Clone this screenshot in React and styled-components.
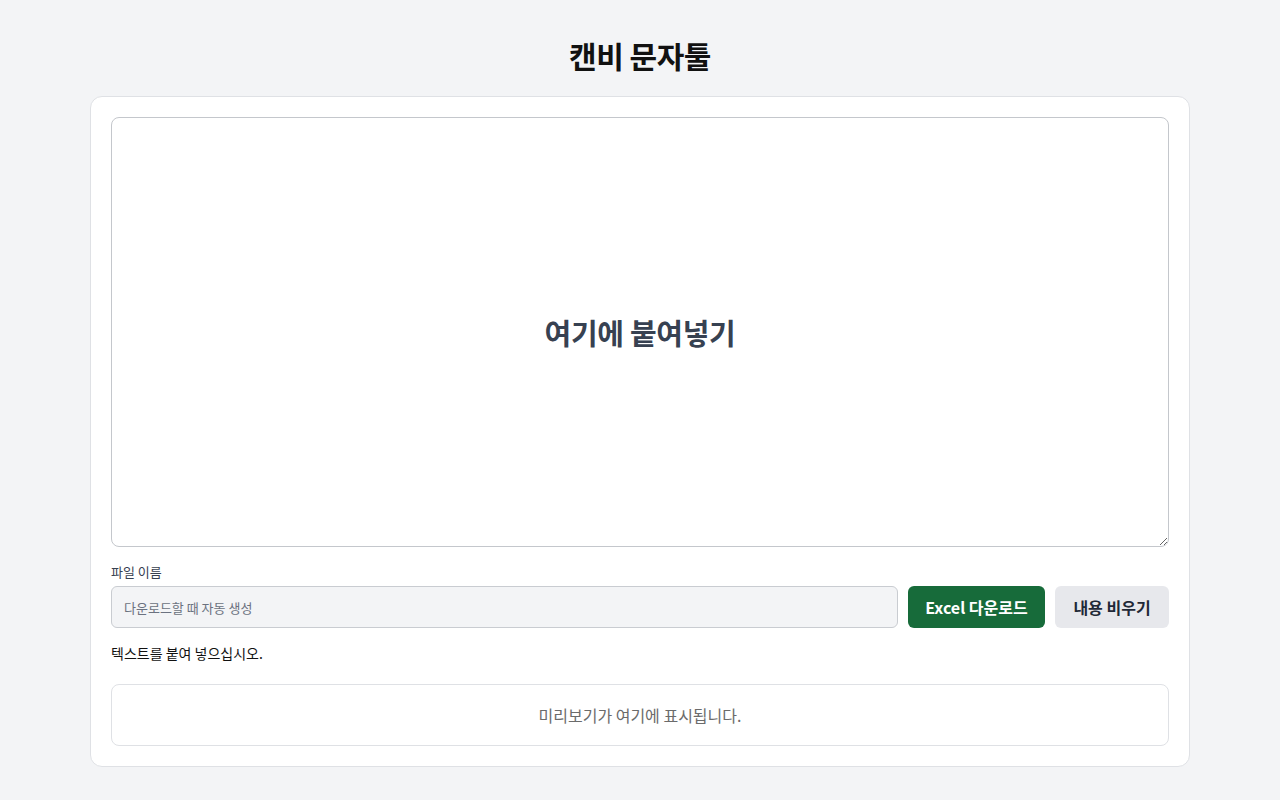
import React, { useState } from "react";
import styled, { createGlobalStyle } from "styled-components";

const GlobalStyle = createGlobalStyle`
  * { box-sizing: border-box; }
  body {
    margin: 0;
    background: #f3f4f6;
    font-family: "Noto Sans CJK KR", "Noto Sans", sans-serif;
    color: #111827;
  }
`;

const Page = styled.main`
  padding: 36px 90px 30px;
  display: flex;
  flex-direction: column;
  align-items: center;
`;

const Title = styled.h1`
  margin: 0 0 22px;
  font-size: 30px;
  line-height: 38px;
  font-weight: 700;
  color: #111;
  letter-spacing: -0.5px;
`;

const Card = styled.section`
  width: 1100px;
  background: #fff;
  border: 1px solid #dfe1e5;
  border-radius: 12px;
  padding: 20px;
  display: flex;
  flex-direction: column;
`;

const PasteWrap = styled.div`
  position: relative;
  height: 430px;
`;

const PasteArea = styled.textarea`
  width: 100%;
  height: 100%;
  border: 1px solid #c4c7cc;
  border-radius: 8px;
  resize: vertical;
  padding: 12px;
  font-family: inherit;
  font-size: 14px;
  outline: none;
  display: block;
`;

const PasteHint = styled.div`
  position: absolute;
  inset: 0;
  display: flex;
  align-items: center;
  justify-content: center;
  pointer-events: none;
  font-size: 29px;
  font-weight: 700;
  color: #374151;
  letter-spacing: -0.3px;
`;

const Label = styled.label`
  margin-top: 16px;
  font-size: 13px;
  line-height: 17px;
  color: #374151;
`;

const Row = styled.div`
  margin-top: 6px;
  display: flex;
  gap: 10px;
`;

const NameInput = styled.input`
  flex: 1;
  height: 42px;
  background: #f3f4f6;
  border: 1px solid #c9ccd1;
  border-radius: 6px;
  padding: 0 12px;
  font-family: inherit;
  font-size: 13px;
  color: #111;
  outline: none;
  &::placeholder { color: #6b7280; }
`;

const Button = styled.button`
  height: 42px;
  padding: 0;
  border: none;
  border-radius: 6px;
  font-family: inherit;
  font-size: 16px;
  font-weight: 700;
  cursor: pointer;
  background: ${p => (p.$primary ? "#176b3a" : "#e7e8ec")};
  color: ${p => (p.$primary ? "#fff" : "#1f2937")};
  width: ${p => p.$w}px;
`;

const Status = styled.p`
  margin: 16px 0 0;
  font-size: 14px;
  line-height: 18px;
  color: #111;
`;

const Preview = styled.div`
  margin-top: 22px;
  height: 62px;
  border: 1px solid #dfe1e5;
  border-radius: 8px;
  display: flex;
  align-items: center;
  justify-content: center;
  font-size: 16px;
  color: #6b6b6b;
`;

export default function App() {
  const [text, setText] = useState("");
  const [name, setName] = useState("");
  return (
    <>
      <GlobalStyle />
      <Page>
        <Title>캔비 문자툴</Title>
        <Card>
          <PasteWrap>
            <PasteArea value={text} onChange={e => setText(e.target.value)} />
            {!text && <PasteHint>여기에 붙여넣기</PasteHint>}
          </PasteWrap>
          <Label htmlFor="fname">파일 이름</Label>
          <Row>
            <NameInput
              id="fname"
              placeholder="다운로드할 때 자동 생성"
              value={name}
              onChange={e => setName(e.target.value)}
            />
            <Button $primary $w={137}>Excel 다운로드</Button>
            <Button $w={114} onClick={() => setText("")}>내용 비우기</Button>
          </Row>
          <Status>텍스트를 붙여 넣으십시오.</Status>
          <Preview>미리보기가 여기에 표시됩니다.</Preview>
        </Card>
      </Page>
    </>
  );
}
